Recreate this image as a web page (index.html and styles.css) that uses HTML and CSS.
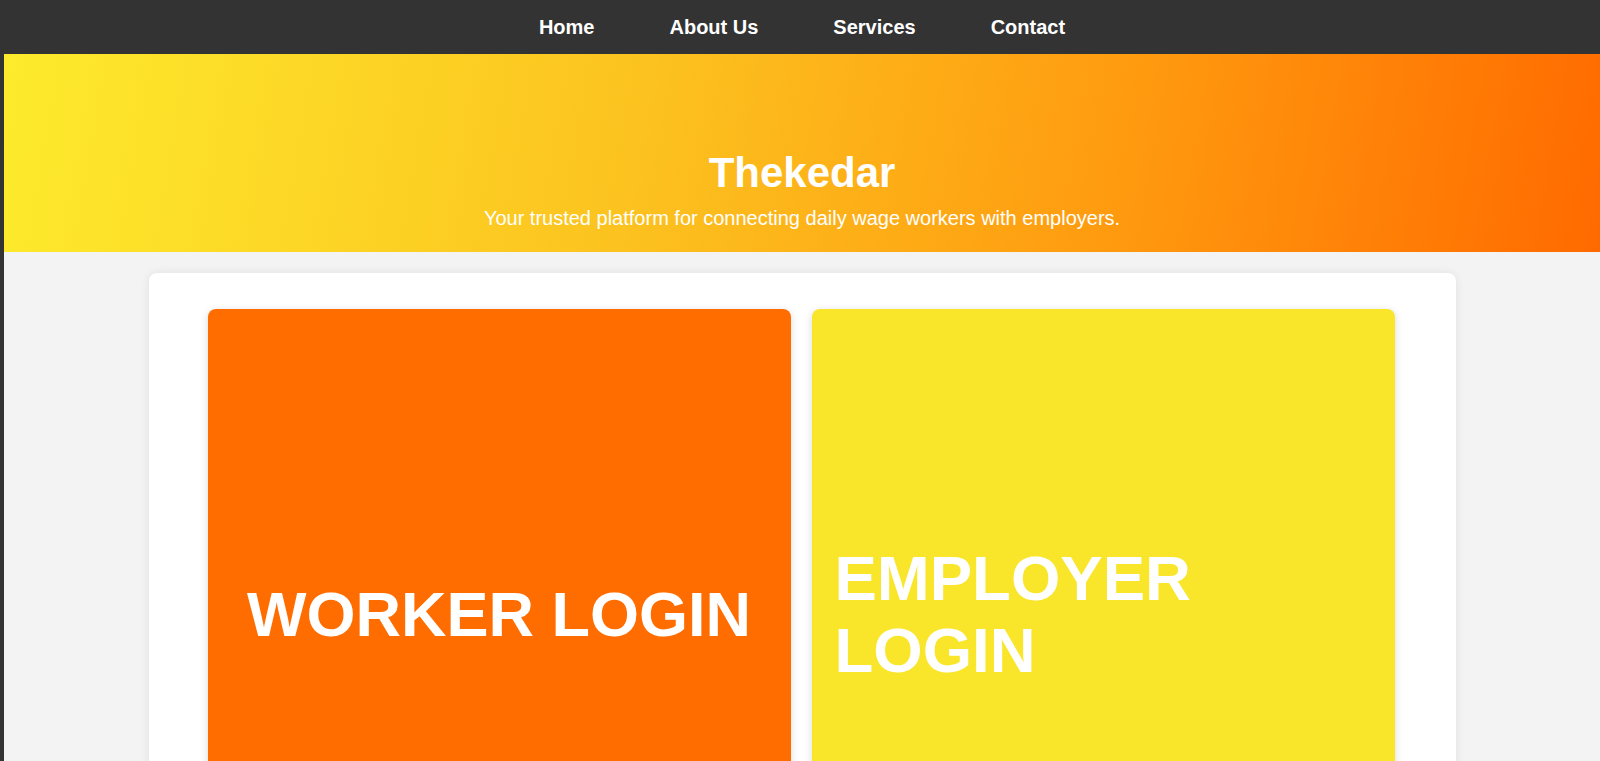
FILE: index.html
```html
<!DOCTYPE html>
<html lang="en">
<head>
<meta charset="utf-8">
<title>Thekedar</title>
<link rel="stylesheet" href="styles.css">
</head>
<body>
<nav class="topnav">
  <a href="#" class="nav-link">Home</a>
  <a href="#" class="nav-link">About Us</a>
  <a href="#" class="nav-link">Services</a>
  <a href="#" class="nav-link">Contact</a>
</nav>
<header class="hero">
  <h1 class="hero-title">Thekedar</h1>
  <p class="hero-sub">Your trusted platform for connecting daily wage workers with employers.</p>
</header>
<main class="panel">
  <a href="#" class="login-card worker"><span class="login-text worker-text">WORKER LOGIN</span></a>
  <a href="#" class="login-card employer"><span class="login-text employer-text">EMPLOYER LOGIN</span></a>
</main>
</body>
</html>
```
FILE: styles.css
```css
* { box-sizing: border-box; }
html, body { height: 100%; }
body {
  margin: 0;
  border-left: 4px solid #333;
  background: #f3f3f3;
  font-family: "Liberation Sans", Arial, sans-serif;
  overflow: hidden;
}
.topnav {
  height: 54px;
  background: #333;
  display: flex;
  justify-content: center;
  align-items: flex-start;
  gap: 75px;
  padding-top: 16px;
}
.nav-link {
  color: #fff;
  text-decoration: none;
  font-weight: bold;
  font-size: 20px;
}
.hero {
  height: 198px;
  background: linear-gradient(100deg, #fdeb2c 0%, #fcc21f 40%, #ff9a0f 70%, #ff6a00 100%);
  color: #fff;
  text-align: center;
  padding-top: 95px;
}
.hero-title {
  margin: 0 0 10px;
  font-size: 42px;
  line-height: 48px;
  font-weight: bold;
}
.hero-sub {
  margin: 0;
  font-size: 20px;
  line-height: 23px;
}
.panel {
  width: 1307px;
  margin: 21px auto 0;
  background: #fff;
  border-radius: 8px;
  box-shadow: 0 0 10px rgba(0,0,0,0.08);
  padding: 36px 60px 40px 59px;
  display: flex;
  gap: 21px;
}
.login-card {
  flex: 0 0 583px;
  height: 612px;
  border-radius: 8px;
  box-shadow: 0 2px 8px rgba(0,0,0,0.15);
  display: flex;
  align-items: center;
  justify-content: center;
  padding: 0 23px;
  color: #fff;
  text-decoration: none;
}
.worker { background: #ff6d00; }
.employer { background: #f9e62a; }
.login-text {
  font-weight: bold;
  line-height: 1.13;
}
.worker-text { font-size: 63px; }
.employer-text { font-size: 63.5px; }
```
